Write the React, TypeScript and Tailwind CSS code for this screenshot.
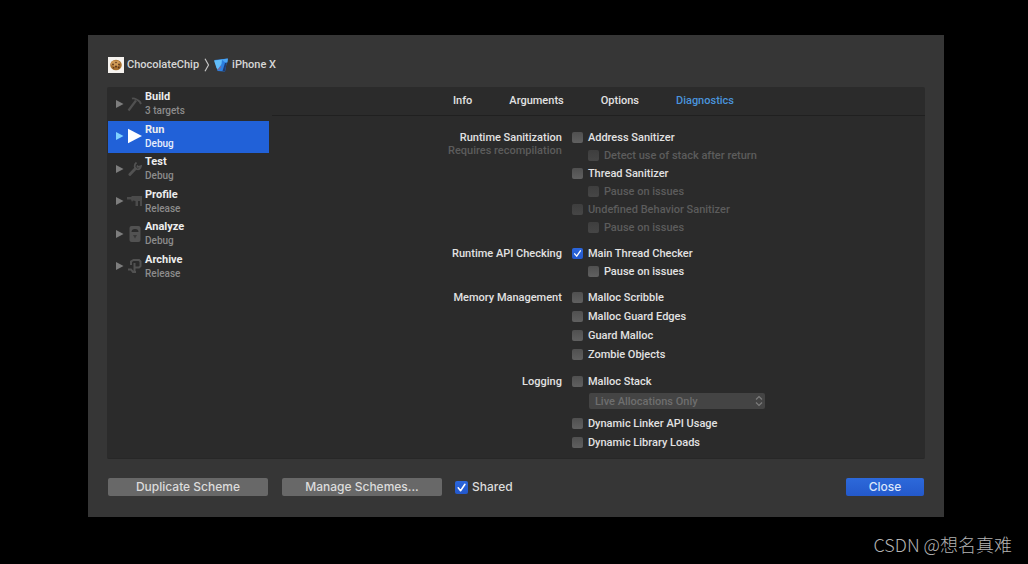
import { useState } from "react";
import type { ReactNode } from "react";

type Phase = { name: string; detail: string; icon: ReactNode };

const phases: Phase[] = [
  {
    name: "Build",
    detail: "3 targets",
    icon: (
      <g fill="none" stroke="#505050">
        <path d="M1.500 14.500 9 4.500" strokeWidth="2.200" />
        <path d="M5 2.600C7.500 1.600 9.500 3 12.800 5.800L14 8" strokeWidth="2" />
      </g>
    ),
  },
  {
    name: "Run",
    detail: "Debug",
    icon: <path d="M1 .8 15 8 1 15.200Z" fill="#fff" />,
  },
  {
    name: "Test",
    detail: "Debug",
    icon: (
      <g fill="none" stroke="#525252">
        <path d="M2.800 13.500 8.500 7.500" strokeWidth="2.800" strokeLinecap="round" />
        <path d="M9.500 1.500C7 3.500 7 7 9.500 8S13.500 7.500 14 5L11 6 10 4.500" strokeWidth="1.800" />
      </g>
    ),
  },
  {
    name: "Profile",
    detail: "Release",
    icon: (
      <path
        d="M0 4H4L5 3H15V13H13V8H11V13H8.500V8L6 7.500 5 9 4 6.500H0Z"
        fill="#4b4b4b"
      />
    ),
  },
  {
    name: "Analyze",
    detail: "Debug",
    icon: (
      <g>
        <rect x="2.500" y="0" width="11" height="16" rx="2" fill="#525252" />
        <path d="M4.500 6A3.500 3 0 0 1 11.500 6Z" fill="#2b2b2b" />
        <path d="M6 9H10L8 12.500Z" fill="#383838" />
      </g>
    ),
  },
  {
    name: "Archive",
    detail: "Release",
    icon: (
      <g fill="none" stroke="#525252" strokeWidth="2">
        <path d="M4 7V3.500L6.500 2H12L13.500 3.500V8L12 9.500H7" />
        <path d="M7.500 5V14M1 11.500H4L6 14H9" />
      </g>
    ),
  },
];

const tabs = ["Info", "Arguments", "Options", "Diagnostics"];

function CheckInput({
  checked = false,
  disabled = false,
  large = false,
}: {
  checked?: boolean;
  disabled?: boolean;
  large?: boolean;
}) {
  return (
    <span className={`grid shrink-0 ${large ? "size-[13px]" : "size-[11px]"}`}>
      <input
        type="checkbox"
        defaultChecked={checked}
        disabled={disabled}
        className="peer col-start-1 row-start-1 size-full appearance-none rounded-[2px] bg-linear-to-b from-[#505050] to-[#606060] checked:from-[#2b66dc] checked:to-[#2358cc] disabled:from-[#3e3e3e] disabled:to-[#464646]"
      />
      <svg
        viewBox="0 0 11 11"
        aria-hidden="true"
        className="pointer-events-none invisible col-start-1 row-start-1 size-full peer-checked:visible"
      >
        <path
          d="M2.700 5.800 4.700 8.200 8.400 2.800"
          fill="none"
          stroke="#fff"
          strokeWidth="1.300"
          strokeLinecap="round"
          strokeLinejoin="round"
        />
      </svg>
    </span>
  );
}

function Option({
  label,
  nested = false,
  checked,
  disabled = false,
}: {
  label: string;
  nested?: boolean;
  checked?: boolean;
  disabled?: boolean;
}) {
  return (
    <label
      className={`flex items-center gap-[5px] ${nested ? "ml-4 h-[17px]" : "h-[19px]"} ${
        disabled ? "text-[#5c5c5c]" : "text-[#e2e2e2]"
      }`}
    >
      <CheckInput checked={checked} disabled={disabled} />
      <span className="pt-px">{label}</span>
    </label>
  );
}

function Section({ title, note, children }: { title: string; note?: string; children: ReactNode }) {
  return (
    <section className="grid grid-cols-[9fr_11fr] gap-[10px]">
      <div className="text-right">
        <h2 className="leading-[19px] text-[#e2e2e2]">{title}</h2>
        {note && <p className="-mt-1 leading-4 text-[#5c5c5c]">{note}</p>}
      </div>
      <div className="flex flex-col items-start">{children}</div>
    </section>
  );
}

function CookieIcon() {
  return (
    <svg viewBox="0 0 16 16" className="size-4" aria-hidden="true">
      <rect width="16" height="16" fill="#f6f3ef" />
      <ellipse cx="8" cy="8" rx="5.800" ry="5.200" fill="#a9712f" />
      <ellipse cx="7.500" cy="6.500" rx="4.500" ry="3" fill="#cf9a56" />
      <g fill="#5a351c">
        <circle cx="5" cy="7.500" r=".9" />
        <circle cx="8" cy="5.500" r=".8" />
        <circle cx="11" cy="7.500" r=".9" />
        <circle cx="8" cy="9.500" r="1" />
        <circle cx="5.500" cy="10.800" r=".8" />
        <circle cx="10.800" cy="10.500" r=".9" />
      </g>
    </svg>
  );
}

function XcodeIcon() {
  return (
    <svg viewBox="0 0 16 16" className="size-4" aria-hidden="true">
      <path d="M1.500 3 14.500 1.500 12 14.500 4.500 14Z" fill="#2c7fe0" />
      <path d="M1 3.500 9 2.500 8.500 7 5 12.500 3.500 11Z" fill="#62bdf8" />
      <path d="M8.500 2.500 15 1.500 14.500 5.500 11.500 5Z" fill="#4aa5f4" />
      <path d="M12 6 13.500 6 12 14.500 9.500 14Z" fill="#1d3b73" />
      <path d="M5 13 8 9.500" stroke="#7a6a96" strokeWidth="1.200" />
    </svg>
  );
}

export default function App() {
  const [phase, setPhase] = useState("Run");
  const [tab, setTab] = useState("Diagnostics");

  return (
    <div className="relative min-h-screen bg-black pt-[35px] pr-[84px] pb-[47px] pl-[88px] font-[Roboto,'Noto_Sans',sans-serif] text-[11px] font-medium">
      <main className="bg-[#363636] px-5 pt-[21px] pb-[21px]">
        <header className="flex h-[17px] items-center text-[#d6d6d6]">
          <CookieIcon />
          <span className="ml-[3px] pt-px">ChocolateChip</span>
          <svg viewBox="0 0 8 14" className="mr-[2px] ml-1 h-[14px] w-2" aria-hidden="true">
            <path d="M2 .8 5.500 7 2 13.200" fill="none" stroke="#c4c4c4" strokeWidth="1.200" />
          </svg>
          <XcodeIcon />
          <span className="ml-[3px] pt-px">iPhone X</span>
        </header>

        <div className="-mx-px mt-[14px] flex rounded-[2px] border-b border-[#272727] bg-[#2b2b2b]">
          <nav className="w-[165px] shrink-0 pt-px pr-[3px] pl-px" aria-label="Scheme actions">
            <ul className="grid h-[195px] grid-rows-6">
              {phases.map((p) => {
                const selected = p.name === phase;
                return (
                  <li key={p.name} className="grid">
                    <button
                      type="button"
                      onClick={() => setPhase(p.name)}
                      className={`flex items-center pb-px pl-2 text-left ${selected ? "bg-[#2161d8]" : ""}`}
                    >
                      <svg viewBox="0 0 8 10" className="h-[10px] w-2" aria-hidden="true">
                        <path d="M0 1 7.500 5 0 9Z" fill={selected ? "#7fd2ff" : "#7d7d7d"} />
                      </svg>
                      <svg viewBox="0 0 16 16" className="ml-[3px] size-4" aria-hidden="true">
                        {p.icon}
                      </svg>
                      <span className="ml-[2px]">
                        <span className="block leading-[14px] font-bold text-[#ededed]">{p.name}</span>
                        <span
                          className={`block text-[10px] leading-[13px] ${selected ? "text-[#e6eefc]" : "text-[#8c8c8c]"}`}
                        >
                          {p.detail}
                        </span>
                      </span>
                    </button>
                  </li>
                );
              })}
            </ul>
          </nav>

          <div className="min-w-0 grow">
            <div className="flex h-[29px] items-center justify-center gap-[37px] border-b border-[#202020] pt-px pr-[10px]" role="tablist">
              {tabs.map((t) => (
                <button
                  key={t}
                  type="button"
                  role="tab"
                  aria-selected={t === tab}
                  onClick={() => setTab(t)}
                  className={t === tab ? "text-[#4a94dc]" : "text-[#e2e2e2]"}
                >
                  {t}
                </button>
              ))}
            </div>

            <div className="flex flex-col gap-2 pt-3 pb-[6px] pl-px">
              <Section title="Runtime Sanitization" note="Requires recompilation">
                <Option label="Address Sanitizer" />
                <Option label="Detect use of stack after return" nested disabled />
                <Option label="Thread Sanitizer" />
                <Option label="Pause on issues" nested disabled />
                <Option label="Undefined Behavior Sanitizer" disabled />
                <Option label="Pause on issues" nested disabled />
              </Section>
              <Section title="Runtime API Checking">
                <Option label="Main Thread Checker" checked />
                <Option label="Pause on issues" nested />
              </Section>
              <Section title="Memory Management">
                <Option label="Malloc Scribble" />
                <Option label="Malloc Guard Edges" />
                <Option label="Guard Malloc" />
                <Option label="Zombie Objects" />
              </Section>
              <Section title="Logging">
                <Option label="Malloc Stack" />
                <div className="mt-[2px] mb-[5px] ml-[17px] grid w-44 items-center">
                  <select
                    disabled
                    aria-label="Malloc stack logging"
                    className="col-start-1 row-start-1 h-4 appearance-none rounded-[2px] bg-[#444444] pt-px pl-[6px] text-[#6e6e6e] opacity-100"
                  >
                    <option>Live Allocations Only</option>
                  </select>
                  <svg
                    viewBox="0 0 8 12"
                    aria-hidden="true"
                    className="pointer-events-none col-start-1 row-start-1 mr-[2px] h-3 w-2 justify-self-end"
                  >
                    <path d="M1 4.500 4 1.500 7 4.500M1 7.500 4 10.500 7 7.500" fill="none" stroke="#7c7c7c" strokeWidth="1.200" />
                  </svg>
                </div>
                <Option label="Dynamic Linker API Usage" />
                <Option label="Dynamic Library Loads" />
              </Section>
            </div>
          </div>
        </div>

        <footer className="mt-[18px] flex items-center font-[Inter,sans-serif] text-[12px] text-[#dcdcdc]">
          <button type="button" className="h-[18px] w-40 rounded-[2px] bg-[#686868]">
            Duplicate Scheme
          </button>
          <button type="button" className="ml-[14px] h-[18px] w-40 rounded-[2px] bg-[#686868]">
            Manage Schemes...
          </button>
          <label className="ml-[13px] flex items-center gap-1 pt-px">
            <CheckInput checked large />
            Shared
          </label>
          <button
            type="button"
            className="ml-auto h-[18px] w-[78px] rounded-[2px] bg-linear-to-b from-[#2d69da] to-[#2459cb] text-[#dbe6fb]"
          >
            Close
          </button>
        </footer>
      </main>

      <p className="absolute right-4 bottom-2 font-['Noto_Sans_CJK_SC',sans-serif] text-[18px] leading-6 font-light text-[#b4b4b4]">
        CSDN @想名真难
      </p>
    </div>
  );
}
